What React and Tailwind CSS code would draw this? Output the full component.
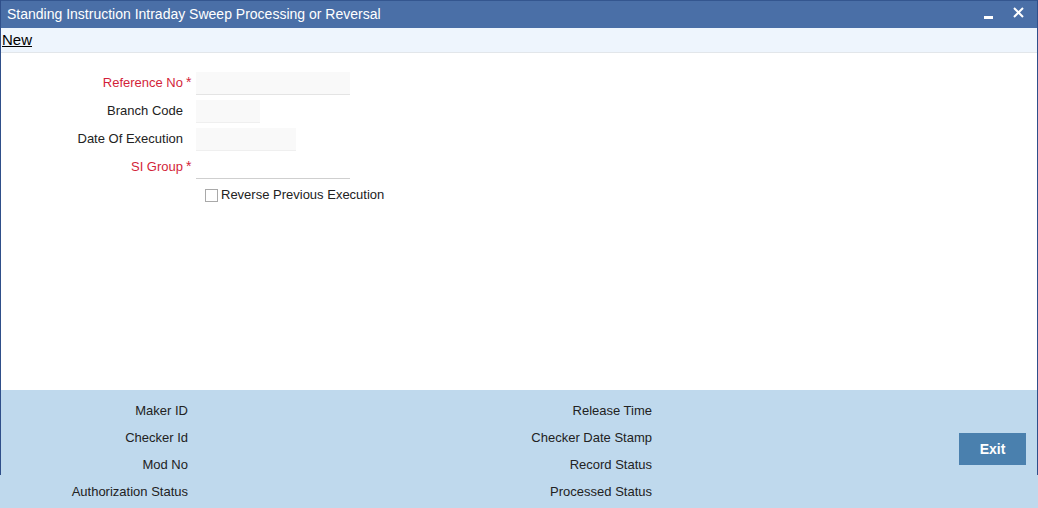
import React from 'react';

const fieldLabel = "w-[183px] text-right text-[13px]";

function Field({ label, required, children }) {
  return (
    <div className="flex items-center h-[28px]">
      <span className={fieldLabel + (required ? " text-[#d31f3a]" : " text-[#222]")}>{label}</span>
      <span className="w-[13px] pl-[3px] text-[#d31f3a] text-[14px] self-start pt-[3px]">{required ? "*" : ""}</span>
      {children}
    </div>
  );
}

function FooterRow({ left, right }) {
  return (
    <div className="flex items-center h-[27px] text-[13px] text-[#222]">
      <span className="w-[188px] text-right">{left}</span>
      <span className="w-[464px] text-right">{right}</span>
    </div>
  );
}

export default function App() {
  return (
    <div className="relative w-[1038px] h-[508px] bg-white overflow-hidden" style={{ fontFamily: '"Liberation Sans", Arial, sans-serif' }}>
      <div className="absolute left-0 top-0 w-px h-[475px] bg-[#2f4f8a]" />
      <div className="absolute right-0 top-0 w-px h-[475px] bg-[#2f4f8a]" />

      <div className="h-[28px] bg-[#4a6fa7] border-t border-[#34568f] flex items-center justify-between pl-[7px] pr-[14px]">
        <span className="text-white text-[14px]">Standing Instruction Intraday Sweep Processing or Reversal</span>
        <div className="flex items-center gap-[20px] text-white">
          <span className="w-[9px] h-[3px] bg-white mt-[6px]" />
          <svg width="11" height="11" viewBox="0 0 11 11" className="mb-[4px]">
            <path d="M1 1 L10 10 M10 1 L1 10" stroke="white" strokeWidth="2" />
          </svg>
        </div>
      </div>

      <div className="h-[25px] bg-[#eef5fd] border-b border-[#e2e6ea] flex items-center pl-[2px]">
        <span className="text-[15px] text-black underline">New</span>
      </div>

      <div className="pt-[16px] h-[337px]">
        <Field label="Reference No" required>
          <div className="w-[154px] h-[23px] bg-[#f9f9f9] border-b border-[#e4e4e4]" />
        </Field>
        <Field label="Branch Code">
          <div className="w-[64px] h-[23px] bg-[#f9f9f9] border-b border-[#efefef]" />
        </Field>
        <Field label="Date Of Execution">
          <div className="w-[100px] h-[23px] bg-[#f9f9f9] border-b border-[#efefef]" />
        </Field>
        <Field label="SI Group" required>
          <div className="w-[154px] h-[23px] border-b border-[#cfcfcf]" />
        </Field>
        <div className="flex items-center h-[28px] pl-[205px]">
          <span className="w-[13px] h-[13px] border border-[#a9a9a9] bg-white" />
          <span className="ml-[3px] text-[13px] text-[#222]">Reverse Previous Execution</span>
        </div>
      </div>

      <div className="h-[118px] bg-[#bfd9ed] flex pt-[7px]">
        <div className="flex flex-col">
          <FooterRow left="Maker ID" right="Release Time" />
          <FooterRow left="Checker Id" right="Checker Date Stamp" />
          <FooterRow left="Mod No" right="Record Status" />
          <FooterRow left="Authorization Status" right="Processed Status" />
        </div>
        <div className="flex-1 flex justify-end pr-[12px] pt-[36px]">
          <button className="w-[67px] h-[32px] bg-[#4a80ae] text-white font-bold text-[14px]">Exit</button>
        </div>
      </div>
    </div>
  );
}
